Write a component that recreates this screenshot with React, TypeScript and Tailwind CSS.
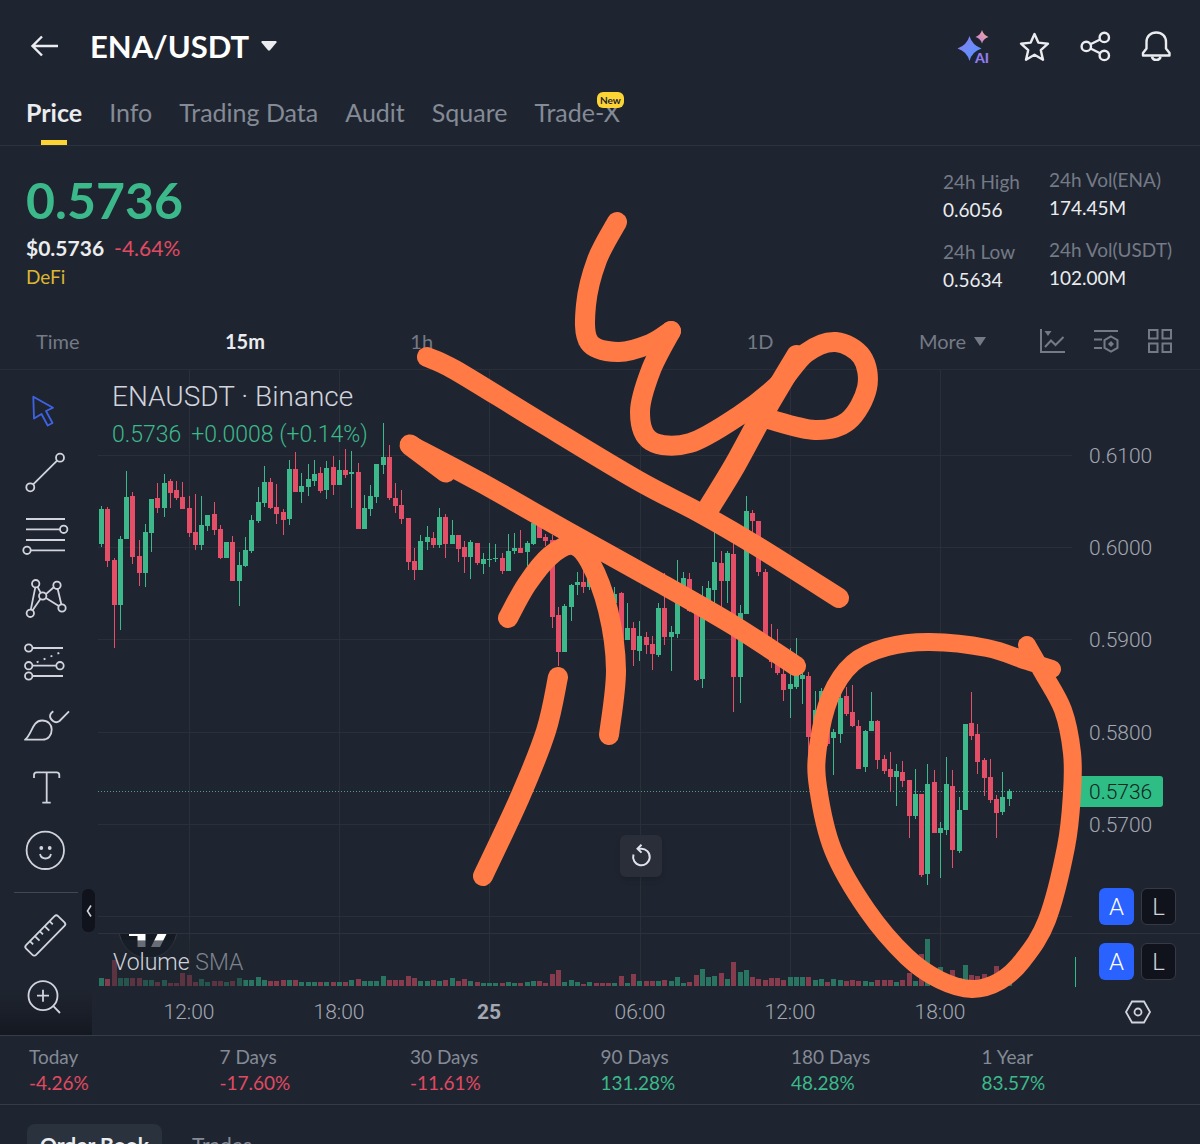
import React, { useState } from "react";

// [rising, high, body top, body bottom, low], three units to a chart pixel
const candles: number[][] = [
  [1, 408, 417, 521, 532], [0, 411, 417, 573, 590], [0, 563, 570, 705, 833], [1, 499, 507, 705, 780],
  [1, 303, 381, 507, 507], [0, 366, 378, 561, 582], [0, 509, 558, 609, 648], [1, 462, 486, 609, 652],
  [1, 387, 387, 489, 546], [0, 339, 384, 414, 429], [1, 311, 339, 414, 440], [0, 327, 333, 370, 413],
  [0, 333, 360, 384, 390], [0, 336, 381, 417, 417], [0, 378, 414, 489, 501], [0, 372, 486, 525, 540],
  [1, 378, 465, 525, 540], [1, 435, 435, 467, 482], [0, 396, 432, 480, 495], [0, 466, 477, 564, 567],
  [1, 516, 516, 564, 564], [0, 498, 516, 633, 633], [1, 546, 585, 633, 708], [1, 502, 540, 588, 591],
  [1, 435, 450, 543, 550], [1, 352, 396, 453, 460], [1, 288, 336, 399, 411], [0, 324, 336, 414, 416],
  [0, 342, 411, 432, 462], [0, 417, 426, 450, 495], [1, 269, 297, 447, 465], [0, 246, 297, 366, 366],
  [1, 308, 348, 366, 400], [1, 282, 327, 351, 378], [1, 270, 312, 333, 348], [0, 291, 309, 363, 369],
  [1, 273, 294, 360, 388], [0, 257, 291, 345, 375], [1, 270, 300, 345, 345], [0, 236, 300, 315, 324],
  [1, 243, 306, 312, 414], [0, 279, 306, 477, 477], [1, 375, 414, 477, 477], [1, 345, 378, 417, 438],
  [1, 282, 282, 381, 398], [1, 158, 261, 286, 312], [0, 225, 261, 384, 390], [0, 339, 384, 408, 428],
  [0, 360, 405, 447, 462], [0, 444, 444, 576, 600], [0, 534, 573, 600, 630], [1, 495, 513, 600, 600],
  [1, 467, 501, 516, 540], [0, 486, 504, 525, 534], [1, 415, 441, 525, 534], [0, 431, 441, 521, 564],
  [1, 450, 495, 521, 521], [0, 495, 495, 537, 576], [0, 513, 531, 561, 609], [1, 510, 516, 561, 628],
  [0, 519, 519, 579, 585], [1, 549, 567, 582, 613], [1, 519, 567, 570, 590], [1, 522, 564, 567, 576],
  [0, 549, 564, 603, 613], [1, 492, 543, 603, 603], [1, 490, 534, 543, 552], [0, 480, 534, 549, 549],
  [1, 513, 518, 546, 588], [1, 450, 459, 522, 524], [0, 459, 459, 504, 504], [0, 492, 501, 514, 528],
  [0, 495, 510, 741, 774], [0, 711, 735, 846, 888], [1, 702, 708, 846, 846], [1, 642, 645, 711, 754],
  [1, 606, 636, 645, 675], [0, 590, 636, 651, 670], [1, 600, 620, 651, 660], [0, 600, 620, 640, 650],
  [0, 620, 640, 680, 690], [0, 650, 670, 700, 710], [1, 651, 672, 699, 710], [0, 666, 669, 810, 810],
  [1, 699, 774, 810, 810], [0, 755, 774, 840, 888], [1, 753, 798, 843, 873], [0, 786, 801, 825, 852],
  [0, 798, 822, 852, 901], [1, 699, 714, 855, 860], [0, 609, 714, 801, 825], [1, 768, 786, 801, 904],
  [1, 570, 675, 792, 803], [1, 606, 624, 675, 680], [0, 608, 626, 723, 725], [0, 715, 723, 930, 934],
  [1, 648, 730, 927, 954], [1, 633, 654, 720, 725], [1, 480, 576, 660, 705], [0, 543, 579, 633, 710],
  [1, 542, 549, 633, 699], [0, 515, 552, 921, 1026], [1, 706, 729, 921, 999], [1, 378, 423, 732, 732],
  [0, 420, 429, 453, 510], [0, 453, 453, 606, 618], [0, 597, 606, 810, 820], [0, 762, 810, 875, 893],
  [0, 776, 850, 909, 915], [0, 890, 912, 960, 992], [1, 835, 942, 957, 1044], [1, 804, 915, 951, 957],
  [1, 900, 915, 927, 1002], [0, 906, 918, 1101, 1210], [1, 963, 1020, 1101, 1101], [1, 955, 963, 1100, 1110],
  [0, 963, 1000, 1122, 1128], [1, 1076, 1086, 1104, 1215], [1, 975, 984, 1092, 1120], [0, 950, 978, 1032, 1038],
  [0, 946, 1026, 1068, 1071], [0, 1050, 1068, 1197, 1197], [1, 1080, 1083, 1191, 1205], [1, 966, 1053, 1083, 1083],
  [0, 1050, 1053, 1170, 1197], [0, 1155, 1167, 1203, 1212], [0, 1147, 1197, 1221, 1266], [1, 1182, 1203, 1221, 1308],
  [0, 1173, 1206, 1233, 1251], [0, 1230, 1230, 1338, 1404], [1, 1196, 1272, 1338, 1348], [0, 1272, 1272, 1515, 1522],
  [1, 1183, 1242, 1512, 1545], [0, 1200, 1236, 1389, 1389], [1, 1357, 1374, 1389, 1525], [1, 1160, 1242, 1380, 1394],
  [0, 1200, 1248, 1440, 1495], [1, 1280, 1320, 1443, 1448], [1, 1062, 1062, 1320, 1320], [0, 966, 1059, 1098, 1110],
  [0, 1062, 1092, 1176, 1212], [0, 1164, 1170, 1224, 1278], [0, 1167, 1221, 1290, 1299], [0, 1275, 1287, 1329, 1404],
  [1, 1207, 1281, 1326, 1335], [1, 1258, 1263, 1287, 1307],
];

const volumes = [
  8, 7, 26, 8, 8, 8, 8, 6, 6, 4, 6, 3, 3, 13, 11, 4, 7, 4, 5, 5, 4, 5, 8, 6, 6, 9, 6, 5, 5, 6, 6, 6, 4, 4, 4, 4, 4,
  4, 4, 4, 6, 7, 5, 5, 5, 10, 6, 6, 6, 10, 8, 5, 5, 6, 5, 6, 8, 5, 7, 5, 4, 3, 3, 3, 3, 4, 3, 3, 4, 5, 5, 3, 12, 16,
  4, 6, 4, 2, 4, 3, 3, 3, 3, 10, 3, 12, 5, 5, 5, 5, 6, 5, 9, 3, 4, 11, 17, 9, 10, 13, 7, 24, 14, 16, 9, 7, 6, 8, 8,
  6, 9, 9, 9, 9, 6, 7, 4, 7, 6, 5, 6, 5, 5, 4, 6, 6, 6, 4, 6, 13, 5, 32, 47, 14, 19, 8, 16, 8, 21, 11, 10, 12, 9, 20,
  14, 6,
];

const priceTicks = [
  { label: "0.6100", y: 86 },
  { label: "0.6000", y: 178 },
  { label: "0.5900", y: 270 },
  { label: "0.5800", y: 363 },
  { label: "0.5700", y: 455 },
  { label: "", y: 547 },
];

const timeTicks = [
  { label: "12:00", x: 189 },
  { label: "18:00", x: 339 },
  { label: "25", x: 489, strong: true },
  { label: "06:00", x: 640 },
  { label: "12:00", x: 790 },
  { label: "18:00", x: 940 },
];

const tabs = ["Price", "Info", "Trading Data", "Audit", "Square", "Trade-X"];
const intervals = ["Time", "15m", "1h", "4h", "1D"];

const changes = [
  { label: "Today", value: "-4.26%" },
  { label: "7 Days", value: "-17.60%" },
  { label: "30 Days", value: "-11.61%" },
  { label: "90 Days", value: "131.28%" },
  { label: "180 Days", value: "48.28%" },
  { label: "1 Year", value: "83.57%" },
];

const stats = [
  [
    { label: "24h High", value: "0.6056" },
    { label: "24h Low", value: "0.5634" },
  ],
  [
    { label: "24h Vol(ENA)", value: "174.45M" },
    { label: "24h Vol(USDT)", value: "102.00M" },
  ],
];

const tools = [
  {
    name: "Cursor",
    art: <path stroke="#3f63e6" d="M12.3 9.7 32 20.7 25 24 31.5 36 26.7 38.5 20.5 27 13 31.5Z" />,
  },
  {
    name: "Trend line",
    art: (
      <>
        <circle cx="9.3" cy="37.3" r="4" />
        <circle cx="39" cy="7.7" r="4" />
        <path d="M12.2 34.4 36.1 10.6" />
      </>
    ),
  },
  {
    name: "Parallel lines",
    art: (
      <>
        <path d="M5 6H44M5 16.3H39M5 27H44M10 37.3H44" />
        <circle cx="42.7" cy="16.3" r="3.7" />
        <circle cx="6" cy="37.3" r="3.7" />
      </>
    ),
  },
  {
    name: "Pattern",
    art: (
      <>
        <circle cx="14.7" cy="7.7" r="3.7" />
        <circle cx="36" cy="9.3" r="3.7" />
        <circle cx="21.7" cy="20" r="3.7" />
        <circle cx="41" cy="32" r="3.7" />
        <circle cx="9.3" cy="37.3" r="3.7" />
        <path d="M14.3 11.4 9.8 33.6M16.6 10.9 19.7 16.8M11.6 34.3 19.4 22.9M24.9 18.1 32.8 11.2M36.7 13 40.3 28.3M24.9 22 37.8 30" />
      </>
    ),
  },
  {
    name: "Position",
    art: (
      <>
        <circle cx="7.7" cy="9" r="3.7" />
        <circle cx="7.7" cy="26.7" r="3.7" />
        <circle cx="39" cy="26.7" r="3.7" />
        <circle cx="7.7" cy="37" r="3.7" />
        <path d="M11.4 9H42M11.4 26.7H35.3M11.4 37H42" />
        <path strokeDasharray="2 5.5" d="M15.7 23.3 41 12.7" />
      </>
    ),
  },
  {
    name: "Brush",
    art: (
      <>
        <path d="M4 37.7C11 33 11 18.5 21 18.5 27 18.5 30.7 22.5 30.7 27.5 30.7 33.5 27 37.7 21.5 37.7Z" />
        <path d="M32.3 9.3C28 12 28 16 32 19 34.5 21 36.5 20.5 38.5 19L48 9.3" />
      </>
    ),
  },
  {
    name: "Text",
    art: <path d="M13 13V10Q13 7.3 15.7 7.3H35.6Q38.3 7.3 38.3 10V13M25.7 7.3V37.7M21.3 37.7H29.7" />,
  },
  {
    name: "Icons",
    art: (
      <>
        <circle cx="24.3" cy="22.3" r="18.7" />
        <path d="M19 26C20.5 32 28.5 32 30 26" />
        <circle cx="20.3" cy="20" r="1" fill="#d1d4dc" />
        <circle cx="28.7" cy="20" r="1" fill="#d1d4dc" />
      </>
    ),
  },
];

const lowerTools = [
  {
    name: "Measure",
    art: (
      <g transform="rotate(-45.5 24.3 25.5)">
        <rect x="1.5" y="18.5" width="45.6" height="14" rx="2.5" />
        <path d="M9.5 18.5V23M16.5 18.5V25M23.5 18.5V23M30.5 18.5V25M37.5 18.5V23" />
      </g>
    ),
  },
  {
    name: "Zoom in",
    art: (
      <>
        <circle cx="22" cy="22.7" r="14.5" />
        <path d="M32.4 33.2 39 40M22 16.7V28.7M16 22.7H28" />
      </>
    ),
  },
];

// freehand strokes of the drawing layer
const strokes: { width: number; points: number[][] }[] = [
  { width: 20, points: [[617, 222], [597, 260], [586, 305], [589, 342], [618, 352], [650, 344], [671, 331]] },
  {
    width: 20,
    points: [
      [671, 331], [651, 370], [640, 412], [651, 441], [690, 443], [740, 415], [778, 385], [806, 353], [836, 342],
      [862, 357], [867, 388], [848, 421], [815, 430], [768, 419],
    ],
  },
  { width: 22, points: [[797, 356], [765, 410], [735, 465], [710, 506]] },
  { width: 20, points: [[427, 357], [455, 370], [537, 420], [637, 480], [700, 513], [760, 548], [839, 598]] },
  { width: 20, points: [[410, 445], [480, 482], [570, 533], [660, 583], [733, 625], [796, 666]] },
  { width: 21, points: [[410, 445], [446, 472]] },
  { width: 20, points: [[508, 618], [527, 584], [550, 556], [573, 545], [590, 562], [608, 610], [616, 670], [609, 735]] },
  { width: 20, points: [[558, 677], [546, 731], [520, 797], [483, 876]] },
  {
    width: 18,
    points: [
      [1027, 645], [1043, 673], [1063, 710], [1072, 753], [1072, 793], [1066, 847], [1047, 920], [1023, 960],
      [1000, 981], [972, 989], [940, 980], [907, 957], [867, 910], [833, 850], [818, 787], [818, 747], [830, 697],
      [853, 663], [887, 647], [930, 642], [987, 648], [1027, 661], [1052, 669],
    ],
  },
];

function smooth(p: number[][]) {
  let d = `M${p[0][0]} ${p[0][1]}`;
  for (let i = 0; i < p.length - 1; i++) {
    const a = p[i - 1] || p[i];
    const b = p[i];
    const c = p[i + 1];
    const e = p[i + 2] || c;
    d += `C${b[0] + (c[0] - a[0]) / 6} ${b[1] + (c[1] - a[1]) / 6} ${c[0] - (e[0] - b[0]) / 6} ${c[1] - (e[1] - b[1]) / 6} ${c[0]} ${c[1]}`;
  }
  return d;
}

const ToolButton = ({ name, art }: { name: string; art: React.ReactNode }) => (
  <button aria-label={name} className="flex h-[63px] w-full items-center justify-center">
    <svg
      className="h-[49px] w-[50px]"
      viewBox="0 0 50 49"
      fill="none"
      stroke="#d1d4dc"
      strokeWidth="1.8"
      strokeLinejoin="round"
    >
      {art}
    </svg>
  </button>
);

const ScaleButtons = () => (
  <div className="flex gap-[7px] text-2xl leading-none font-light">
    <button className="h-[37px] w-[35px] rounded-md bg-[#2962ff] text-white">A</button>
    <button className="h-[37px] w-[35px] rounded-md border border-[#363a45] bg-[#10131b] text-[#d1d4dc]">L</button>
  </div>
);

const PriceChart = () => (
  <div className="relative flex-1 font-[Roboto,sans-serif]">
    <svg className="block w-full" viewBox="92 0 1108 665" role="img" aria-label="ENAUSDT price chart">
      <g stroke="#2a2f3a" strokeWidth="1">
        {priceTicks.map((t) => (
          <path key={t.y} d={`M98 ${t.y - 0.5}H1072`} />
        ))}
        {timeTicks.map((t) => (
          <path key={t.x} d={`M${t.x + 0.5} 0V616`} />
        ))}
        <path stroke="#2d323d" d="M98 563.5H1200" />
      </g>

      <g shapeRendering="crispEdges">
        {volumes.map((v, i) => (
          <rect
            key={i}
            x={Math.round(99 + i * 6.26)}
            y={616 - v}
            width="5"
            height={v}
            fill={candles[i][0] ? "#2a7562" : "#863c4d"}
          />
        ))}
        <rect x="1075" y="587" width="1" height="30" fill="#2ebd85" />
      </g>

      {/* clipped watermark */}
      <clipPath id="pane">
        <rect x="100" y="564" width="120" height="40" />
      </clipPath>
      <g clipPath="url(#pane)">
        <circle cx="148" cy="559" r="29" fill="#151922" stroke="#343945" />
        <path fill="#fff" d="M129 563H145.500V571H137.500V566H129ZM158 563H167L163 571H154Z" />
        <path fill="#9a9ca2" d="M137.500 571H145.500V577H137.500ZM154 571H163L160 577H151Z" />
      </g>

      <path d="M98 421.500H1080" stroke="#4b9d86" strokeDasharray="1 2" />
      <g shapeRendering="crispEdges">
        {candles.map(([up, high, top, bottom, low], i) => {
          const x = Math.round(99 + i * 6.26);
          return (
            <g key={i} fill={up ? "#3db88b" : "#e44f67"}>
              <rect x={x + 2} y={high / 3} width="1" height={(low - high) / 3} />
              <rect x={x} y={top / 3} width="5" height={(bottom - top) / 3} />
            </g>
          );
        })}
      </g>

      <g fill="#a3a7b2" fontSize="21" fontWeight="300">
        {priceTicks.map((t) => (
          <text key={t.y} x="1089" y={t.y + 7}>
            {t.label}
          </text>
        ))}
        {timeTicks.map((t) => (
          <text key={t.x} x={t.x} y="649" textAnchor="middle" fontWeight={t.strong ? 700 : 300}>
            {t.label}
          </text>
        ))}
      </g>
      <path fill="#2ebd85" d="M1080 406H1160Q1163 406 1163 409V434Q1163 437 1160 437H1080Z" />
      <text x="1089" y="429" fontSize="21" fontWeight="300" fill="#12251f">
        0.5736
      </text>
    </svg>

    <div className="absolute top-[9px] left-5 font-light">
      <h2 className="text-[28px] leading-9 text-[#d1d4dc]">ENAUSDT · Binance</h2>
      <p className="flex gap-[10px] text-[23px] leading-10 text-[#3bb98b]">
        <span>0.5736</span>
        <span>+0.0008 (+0.14%)</span>
      </p>
    </div>

    <p className="absolute bottom-[49px] left-5 bg-[#1f2530]/40 px-px text-[23px] leading-[46px] font-light text-[#d1d4dc]">
      Volume <span className="text-[#7d828e]">SMA</span>
    </p>

    <button
      aria-label="Reset chart"
      className="absolute top-[465px] left-[528px] flex h-[42px] w-[42px] items-center justify-center rounded-md bg-[#2a2e39] shadow-md"
    >
      <svg className="h-6 w-6" viewBox="0 0 24 24" fill="none" stroke="#e0e3eb" strokeWidth="2">
        <path d="M4.500 10.500A8.300 8.300 0 1 0 12 4.700H9" />
        <path d="M12.500 0.800 8.500 4.700 12.500 8.600" />
      </svg>
    </button>

    <button
      aria-label="Hide drawing tools"
      className="absolute top-[519px] -left-[10px] flex h-[43px] w-[13px] items-center justify-center rounded-md bg-[#10131b]"
    >
      <svg className="h-3 w-2" viewBox="0 0 8 12" fill="none" stroke="#d1d4dc" strokeWidth="1.6">
        <path d="M6 .5 2.500 6 6 11.500" />
      </svg>
    </button>

    <div className="absolute right-6 bottom-[55px] flex flex-col gap-[18px]">
      <ScaleButtons />
      <ScaleButtons />
    </div>
    <button aria-label="Chart settings" className="absolute right-12 bottom-[10px]">
      <svg className="h-[26px] w-7" viewBox="0 0 28 26" fill="none" stroke="#d1d4dc" strokeWidth="1.8">
        <path d="M8 2.500H20L26 13 20 23.500H8L2 13Z" />
        <circle cx="14" cy="13" r="3.5" />
      </svg>
    </button>
  </div>
);

export default function App() {
  const [tab, setTab] = useState("Price");
  const [interval, setInterval] = useState("15m");

  return (
    <main className="relative h-screen overflow-hidden bg-[#1f2530] font-[Lato,sans-serif] text-[#eaecef]">
      {/* HEADER */}
      <header className="flex h-[92px] items-center pr-7 pl-7">
        <button aria-label="Back">
          <svg className="h-8 w-8" viewBox="0 0 32 32" fill="none" stroke="#eaecef" strokeWidth="2.4">
            <path d="M30 16H5M14 6.500 4.500 16 14 25.500" />
          </svg>
        </button>
        <button className="ml-[30px] flex items-center gap-3">
          <h1 className="text-[31px] leading-10 font-bold text-white">ENA/USDT</h1>
          <svg className="h-[10px] w-4" viewBox="0 0 16 10" fill="#eaecef">
            <path d="M1 0H15Q16 .5 15.500 1.500L9 9.300Q8 10 7 9.300L.5 1.500Q0 .5 1 0Z" />
          </svg>
        </button>

        <div className="ml-auto flex gap-[29px]">
          <button aria-label="AI assistant">
            <svg className="h-8 w-8 overflow-visible" viewBox="0 0 32 32">
              <defs>
                <linearGradient id="spark" x1="0" y1="0" x2="1" y2="1">
                  <stop offset="0" stopColor="#8d7bf0" />
                  <stop offset="0.5" stopColor="#6d8cf8" />
                  <stop offset="1" stopColor="#4d8dff" />
                </linearGradient>
                <linearGradient id="spark2" x1="0" y1="1" x2="1" y2="0">
                  <stop offset="0" stopColor="#b57be8" />
                  <stop offset="1" stopColor="#ffb08c" />
                </linearGradient>
              </defs>
              <path fill="url(#spark)" d="M12.500 6Q15 15 24.500 18.500 15 21.500 12.500 31 10 21.500 .5 18.500 10 15 12.500 6Z" />
              <path fill="url(#spark2)" d="M25 0Q26.300 5 31.500 7 26.300 8.700 25 13.500 23.700 8.700 18.500 7 23.700 5 25 0Z" />
              <text
                x="18"
                y="32.5"
                fontSize="14"
                fontWeight="900"
                fill="#8f7df2"
                stroke="#1f2530"
                strokeWidth="2"
                paintOrder="stroke"
              >
                AI
              </text>
            </svg>
          </button>
          <button aria-label="Favorite">
            <svg className="h-8 w-8" viewBox="0 0 32 32" fill="none" stroke="#eaecef" strokeWidth="2.4" strokeLinejoin="round">
              <path d="M16.500 4 20.300 12.600 30 13.700 22.800 20.200 25 29.700 16.500 24.700 8 29.700 10.200 20.200 3 13.700 12.700 12.600Z" />
            </svg>
          </button>
          <button aria-label="Share">
            <svg className="h-8 w-8" viewBox="0 0 32 32" fill="none" stroke="#eaecef" strokeWidth="2.4">
              <circle cx="7.3" cy="16.4" r="4.7" />
              <circle cx="25.3" cy="7.4" r="4.7" />
              <circle cx="25.3" cy="25.4" r="4.7" />
              <path d="M11.500 14.300 21.100 9.500M11.500 18.500 21.100 23.300" />
            </svg>
          </button>
          <button aria-label="Alerts">
            <svg className="h-8 w-8" viewBox="0 0 32 32" fill="none" stroke="#eaecef" strokeWidth="2.4" strokeLinejoin="round">
              <path d="M16.300 2.500C10.500 2.500 6.500 6.500 6.500 12V18.500L3 23V25.500H29.500V23L26 18.500V12C26 6.500 22 2.500 16.300 2.500Z" />
              <path d="M12 26.500C12.500 31 20 31 20.500 26.500" />
            </svg>
          </button>
        </div>
      </header>

      {/* TABS */}
      <nav className="flex gap-[27px] border-b border-[#2b333e] pl-[26px] text-[25px]">
        {tabs.map((t) => (
          <button
            key={t}
            onClick={() => setTab(t)}
            className={`relative flex h-[53px] flex-col items-center ${
              t === tab ? "font-bold text-[#eaecef]" : "text-[#848a96]"
            }`}
          >
            <span className="leading-10">{t}</span>
            {t === tab && <span className="mt-2 h-[5px] w-[26px] bg-[#fcd535]" />}
            {t === "Trade-X" && (
              <span className="absolute top-0 -right-1 rounded-md bg-[#fcd535] px-[3px] text-[10px] leading-4 font-bold text-[#1f2530]">
                New
              </span>
            )}
          </button>
        ))}
      </nav>

      {/* PRICE SUMMARY */}
      <section className="flex justify-between pt-5 pr-7 pb-[19px] pl-[26px]">
        <div>
          <p className="pt-1 pb-[3px] text-[50px] leading-[60px] font-bold text-[#3bb98b]">0.5736</p>
          <p className="flex gap-[10px] text-[21px] leading-[30px]">
            <span className="font-bold">$0.5736</span>
            <span className="text-[#e04a62]">-4.64%</span>
          </p>
          <a href="#defi" className="block text-[19px] leading-7 text-[#dcb632]">
            DeFi
          </a>
        </div>
        <div className="flex text-[19px] leading-7">
          {stats.map((col, i) => (
            <dl key={i} className={i === 0 ? "w-[106px] pt-[2px]" : "w-[123px]"}>
              {col.map((s) => (
                <div key={s.label} className="mb-[14px] whitespace-nowrap last:mb-0">
                  <dt className="text-[#747a86]">{s.label}</dt>
                  <dd>{s.value}</dd>
                </div>
              ))}
            </dl>
          ))}
        </div>
      </section>

      {/* INTERVALS */}
      <div className="flex h-[57px] items-center gap-[53px] border-b border-[#282e3a] pr-[27px] pl-9 text-xl text-[#747a86]">
        <div className="flex flex-1 justify-between">
          {intervals.map((t) => (
            <button
              key={t}
              onClick={() => setInterval(t)}
              className={t === interval ? "font-bold text-[#eaecef]" : ""}
            >
              {t}
            </button>
          ))}
          <button className="flex items-center gap-2">
            More
            <svg className="h-[9px] w-3" viewBox="0 0 12 9" fill="#747a86">
              <path d="M0 0H12L6 9Z" />
            </svg>
          </button>
        </div>
        <div className="flex gap-7">
          <button aria-label="Indicators">
            <svg className="h-[26px] w-[26px]" viewBox="0 0 26 26" fill="none" stroke="#747a86" strokeWidth="2">
              <path d="M2 1V24H26M6 19 12 12.500 16.500 17 24.500 9" />
              <path fill="#747a86" stroke="none" d="M5.500 3H12.500L9 8Z" />
            </svg>
          </button>
          <button aria-label="Chart preferences">
            <svg className="h-[26px] w-[26px]" viewBox="0 0 26 26" fill="none" stroke="#747a86" strokeWidth="2">
              <path d="M1 3H25M1 11.500H9M1 20H9M18 8.500 24.500 12.200V19.800L18 23.500 11.500 19.800V12.200Z" />
              <path fill="#747a86" stroke="none" d="M18 13 21 16 18 19 15 16Z" />
            </svg>
          </button>
          <button aria-label="Layout">
            <svg className="h-[26px] w-[26px]" viewBox="0 0 26 26" fill="none" stroke="#747a86" strokeWidth="2">
              <path d="M2 2H10.500V10.500H2ZM15.500 2H24V10.500H15.500ZM2 15.500H10.500V24H2ZM15.500 15.500H24V24H15.500Z" />
            </svg>
          </button>
        </div>
      </div>

      {/* CHART */}
      <section className="flex">
        <div className="w-[92px] bg-linear-to-b from-transparent from-93% to-[#141821] pt-[10px]">
          {tools.map((t) => (
            <ToolButton key={t.name} {...t} />
          ))}
          <hr className="mx-[14px] mt-2 mb-[10px] border-[#434753]" />
          {lowerTools.map((t) => (
            <ToolButton key={t.name} {...t} />
          ))}
        </div>
        <PriceChart />
      </section>

      {/* CHANGES */}
      <dl className="grid grid-cols-6 border-y border-[#353c47] pt-2 pr-7 pb-2 pl-[29px] text-[19px] leading-[26px]">
        {changes.map((c) => (
          <div key={c.label}>
            <dt className="text-[#848a96]">{c.label}</dt>
            <dd className={c.value.startsWith("-") ? "text-[#e04a62]" : "text-[#3bb98b]"}>{c.value}</dd>
          </div>
        ))}
      </dl>

      {/* ORDER BOOK */}
      <nav className="flex gap-[30px] pt-[19px] pl-[27px] text-[21px] leading-[42px]">
        <button className="rounded-lg bg-[#29323d] px-[13px] font-bold">Order Book</button>
        <button className="text-[#848a96]">Trades</button>
      </nav>

      {/* DRAWING LAYER */}
      <svg
        className="pointer-events-none absolute inset-x-0 top-0 w-full"
        viewBox="0 0 1200 1144"
        fill="none"
        stroke="#ff7a45"
        strokeLinecap="round"
        strokeLinejoin="round"
      >
        {strokes.map((s, i) => (
          <path key={i} d={smooth(s.points)} strokeWidth={s.width} />
        ))}
      </svg>
    </main>
  );
}
